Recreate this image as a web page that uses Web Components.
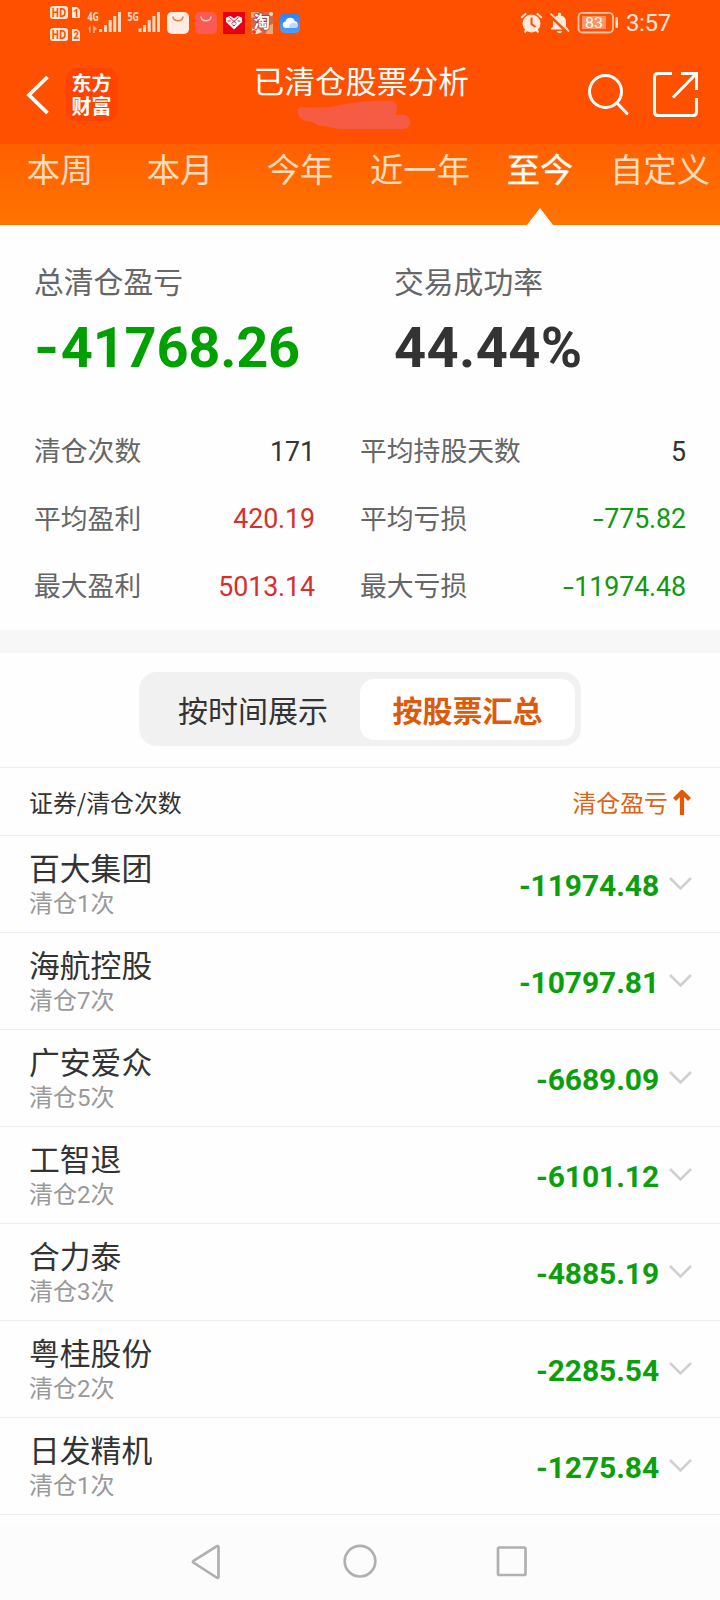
<!DOCTYPE html>
<html lang="zh-CN">
<head>
<meta charset="utf-8">
<title>已清仓股票分析</title>
<style>
html,body{margin:0;padding:0;background:#fefefe}
body{width:720px;height:1600px;overflow:hidden;font-family:"Noto Sans CJK SC",sans-serif;color:#333}
</style>
</head>
<body>
<closed-analysis></closed-analysis>
<script>
function define(name, html) {
  const t = document.createElement('template');
  t.innerHTML = html;
  customElements.define(name, class extends HTMLElement {
    constructor() {
      super();
      this.attachShadow({mode: 'open'}).appendChild(t.content.cloneNode(true));
    }
  });
}

define('status-bar', `
<style>
:host{display:flex;height:50px;box-sizing:border-box;align-items:flex-start;padding:0 49px 0 49px;color:#ffe9dc;justify-content:space-between}
.g{display:flex}
svg{display:block;height:50px}
.time{font:24px/47px Roboto,sans-serif;letter-spacing:-.3px;margin-left:7px}
text{font-family:"Open Sans",sans-serif;font-weight:700}
</style>
<div class="g">
 <svg width="35" viewBox="49 0 35 50">
  <g fill="#ffe9dc"><rect x="50" y="6" width="18" height="13" rx="3"/><rect x="50" y="28" width="18" height="13" rx="3"/>
  <path d="M72 7h5l3 3v8h-8zM72 29h5l3 3v9h-8z"/></g>
  <g fill="#ff5000" font-size="11.5"><text x="51.5" y="16.8" textLength="15" lengthAdjust="spacingAndGlyphs">HD</text><text x="51.5" y="38.8" textLength="15" lengthAdjust="spacingAndGlyphs">HD</text><text x="73.2" y="16.7" font-size="10">1</text><text x="73.2" y="38.7" font-size="10">2</text></g>
 </svg>
 <svg width="39" viewBox="84 0 39 50" fill="#ffd9c4">
  <text x="87.500" y="20.500" font-size="11.500" textLength="11.500" lengthAdjust="spacingAndGlyphs">4G</text>
  <path d="M99 29h3v3h-3zM104 25h3v7h-3zM108.700 20h3v12h-3zM113.200 16h3v16h-3zM118 12h3v20h-3z"/>
  <path d="M88 29l2.500-3.500v7h-1.500v-4zM93 25l4 4-2 1v3h-2z" opacity=".65"/>
 </svg>
 <svg width="42" viewBox="123 0 42 50" fill="#ffd9c4">
  <text x="127.500" y="20.500" font-size="11.500" textLength="11.500" lengthAdjust="spacingAndGlyphs">5G</text>
  <path d="M138.500 28.500h3v3.500h-3zM143 25h3v7h-3zM147.700 20h3v12h-3zM152.400 16h3v16h-3zM157 12h3v20h-3z"/>
 </svg>
 <svg width="57" viewBox="165 0 57 50">
  <rect x="167" y="12" width="22" height="22" rx="5" fill="#ffede4"/><path d="M173 17c1 5 9 5 10 0" fill="none" stroke="#e77b4b" stroke-width="1.400" stroke-linecap="round"/>
  <rect x="195" y="12" width="22" height="22" rx="5" fill="#fb5953"/><path d="M201 17c1 5 9 5 10 0" fill="none" stroke="#ffd0c8" stroke-width="1.400" stroke-linecap="round"/>
 </svg>
 <svg width="80" viewBox="222 0 80 50">
  <rect x="223" y="12" width="22" height="22" fill="#e60012"/>
  <path d="M234 29.500l-8-7.500v-4.500l4.500-1.500 3.500 2.500 3.500-2.500 4.500 1.500v4.500z" fill="#fff"/>
  <path d="M229.500 17.500l7 6M238.500 17.500l-7 6M227.500 21h3M237.500 21h3M232.500 24.500l1.500 1.500 1.500-1.500" stroke="#e60012" stroke-width=".9" fill="none"/>
  <rect x="251" y="12" width="22" height="22" fill="#d2694c"/><path d="M251 12h8l-4 5-4 1zM267 26l6-2v10h-7z" fill="#e8a87c"/><path d="M252 29l5-2 5 5-5 2h-5z" fill="#efe1cf"/><circle cx="271" cy="14" r="2" fill="#f7ddbd"/><circle cx="254" cy="32" r="2" fill="#ee3a22"/>
  <text x="253.500" y="27.500" font-size="16.500" fill="#fff" stroke="#a0453a" stroke-width="1.500" paint-order="stroke" style="font-family:'Noto Sans CJK SC',sans-serif">淘</text>
  <defs><linearGradient id="c" x2="0" y2="1"><stop stop-color="#2f80f1"/><stop offset="1" stop-color="#4aa0ff"/></linearGradient></defs>
  <rect x="280" y="13" width="20" height="20" rx="5" fill="url(#c)"/>
  <path d="M285.500 28a3.300 3.300 0 0 1 0-6.500 4.800 4.800 0 0 1 9.200-.5 3.600 3.600 0 0 1 .3 7z" fill="#fff"/><path d="M289 28a4 4 0 0 1 4-5 4 4 0 0 1 5 2 3 3 0 0 1-3 3z" fill="#b9dcff"/>
 </svg>
</div>
<div class="g">
 <svg width="99" viewBox="520 0 99 50">
  <g fill="#ffe9dc"><circle cx="531.500" cy="23.500" r="9"/><path d="M520.500 17l5-4.300 1.300 1.500-5 4.300zM542.500 17l-5-4.300-1.300 1.500 5 4.300zM524 31l2-2 1.500 1.500-2.500 3zM539 31l-2-2-1.500 1.500 2.500 3z"/></g>
  <path d="M531.500 17.500v6.500l4 3" stroke="#ff5000" stroke-width="2" fill="none"/>
  <path d="M551 28.500l2-2v-5c0-3 2-5.300 5-6V14c0-1.800 3-1.800 3 0v1.500c3 .7 5 3 5 6v5l2.200 2v.9H551zM557 31h5c-.5 3-4.500 3-5 0z" fill="#ffe9dc"/>
  <path d="M549 14.500l18.500 18" stroke="#ff5000" stroke-width="3"/><path d="M550.500 13.500l18.500 18" stroke="#ffe9dc" stroke-width="1.700"/>
  <rect x="578.500" y="12.800" width="34.500" height="19.700" rx="4" fill="none" stroke="#ffc3a6" stroke-width="1.800"/><rect x="582" y="16" width="24" height="13" fill="#ff9361"/><rect x="615.500" y="17" width="2.500" height="11" rx="1" fill="#ffe0d0"/>
  <text x="585" y="28" font-size="15.500" fill="#fff" style="font-family:Roboto,sans-serif;font-weight:400" textLength="18" lengthAdjust="spacingAndGlyphs">83</text>
 </svg>
 <div class="time">3:57</div>
</div>`);

define('brand-logo', `
<style>:host{display:block;width:52px;height:53px;border-radius:11px;background:#ff4400;color:#fff;font:700 20px/23px "Noto Sans CJK SC",sans-serif;text-align:center;box-sizing:border-box;padding-top:3px}</style>东方<br>财富`);

define('title-bar', `
<style>
:host{display:flex;height:94px;align-items:flex-start;box-sizing:border-box;padding:0 20px 0 25px;color:#fff}
.back{margin-top:24px}
brand-logo{margin:18px 0 0 15.500px}
.mid{flex:1;display:flex;flex-direction:column;align-items:center;padding-left:18px;margin-right:7px}
.t{font-size:30.800px;line-height:44px;margin-top:8px;white-space:nowrap}
.scr{margin-top:-2px;margin-left:-16px}
svg{display:block}
.ic{margin-top:20px;margin-left:-7px}
</style>
<svg class="back" width="25" height="42" fill="none" stroke="#fff" stroke-width="3.800"><path d="M22.500 3L4 21l18.500 18"/></svg>
<brand-logo></brand-logo>
<div class="mid"><div class="t">已清仓股票分析</div>
<svg class="scr" width="114" height="30" viewBox="297 100 114 30"><path d="M303 107c15 1 28 1 38-2 18-4 40-5 53-4 5 2 5 9 2 14 8-1 15 0 15 7 0 5-3 7-9 7h-58c-8 0-12-2-19-3-8 1-10-5-17-5-8-1-14-12-5-14z" fill="#f65c43"/></svg></div>
<svg class="ic" width="113" height="55" viewBox="587 70 113 55" fill="none" stroke="#fff" stroke-width="3"><circle cx="605.500" cy="91.500" r="16"/><path d="M617 103l10 10.500" stroke-linecap="round"/><path d="M672 73.500h-14q-3.500 0-3.500 3.500v35q0 3.500 3.500 3.500h35q3.500 0 3.500-3.500V98M681 73.500h15.500V90M696 74l-23 23.500"/></svg>`);

define('period-tab', `
<style>
:host{display:flex;flex-direction:column;align-items:center;justify-content:space-between;color:#ffdcbb;font-size:33.300px;line-height:48px;white-space:nowrap}
:host([active]){color:#fff}
:host([active]) span{-webkit-text-stroke:.35px #fff}
i{display:none;width:26px;height:17px;background:#fefefe;clip-path:polygon(50% 0,100% 100%,0 100%)}
:host([active]) i{display:block}
</style><span><slot></slot></span><i></i>`);

define('period-tabs', `
<style>:host{display:grid;grid-template-columns:repeat(6,120px);height:81px;background:linear-gradient(#ff6000,#ff7400)}</style>
<period-tab>本周</period-tab><period-tab>本月</period-tab><period-tab>今年</period-tab><period-tab>近一年</period-tab><period-tab active>至今</period-tab><period-tab>自定义</period-tab>`);

define('head-stat', `
<style>
:host{display:block}
.l{font-size:29.800px;line-height:44px;color:#666}
.v{font:700 56px/66px Roboto,sans-serif;color:var(--c,#333);letter-spacing:var(--ls,0);margin-top:13px}
</style><div class="l"><slot name="label"></slot></div><div class="v"><slot></slot></div>`);

define('stat-pair', `
<style>
:host{display:flex;justify-content:space-between;align-items:center;height:67.500px}
.l{font-size:26.800px;line-height:40px;color:#666}
.v{font:26.800px/40px Roboto,sans-serif;color:var(--c,#333);padding-top:3px;letter-spacing:-.1px}
</style><div class="l"><slot name="label"></slot></div><div class="v"><slot></slot></div>`);

define('stat-panel', `
<style>
:host{display:block;height:405px;box-sizing:border-box;padding:33px 34px 0 34px}
.top{display:grid;grid-template-columns:360px 1fr;height:158.500px}
.grid{display:grid;grid-template-columns:281px 326px;column-gap:45px}
.g{--c:#0f990f}.r{--c:#d7302c}
.m{display:inline-block;transform:scaleX(1.45);transform-origin:0 50%;margin-right:4px}
.top .m{transform:scaleX(1.15);margin-right:5px}
</style>
<div class="top"><head-stat style="--c:#00a000;--ls:-.25px"><span slot="label">总清仓盈亏</span><span class="m">-</span>41768.26</head-stat><head-stat style="--ls:.4px"><span slot="label">交易成功率</span>44.44%</head-stat></div>
<div class="grid">
<stat-pair><span slot="label">清仓次数</span>171</stat-pair><stat-pair><span slot="label">平均持股天数</span>5</stat-pair>
<stat-pair class="r"><span slot="label">平均盈利</span>420.19</stat-pair><stat-pair class="g"><span slot="label">平均亏损</span><span class="m">-</span>775.82</stat-pair>
<stat-pair class="r"><span slot="label">最大盈利</span>5013.14</stat-pair><stat-pair class="g"><span slot="label">最大亏损</span><span class="m">-</span>11974.48</stat-pair>
</div>`);

define('view-switch', `
<style>
:host{display:block;border-top:23px solid #f7f7f7;padding:19px 0 21px;border-bottom:1px solid #ebebeb}
.box{display:grid;grid-template-columns:221px 215px;width:442px;height:74px;box-sizing:border-box;margin:0 auto;background:#f1f1f1;border-radius:18px;padding:7px 6px 6px 0;font-size:30px;text-align:center;line-height:60px}
.a{padding-left:7px}
.b{background:#fff;border-radius:14px;color:#dd5a0b;font-weight:700}
</style><div class="box"><div class="a">按时间展示</div><div class="b">按股票汇总</div></div>`);

define('list-head', `
<style>
:host{display:flex;justify-content:space-between;align-items:center;height:67px;padding:0 28px 0 29px;border-bottom:1px solid #ebebeb;font-size:23.900px;line-height:36px}
.s{display:flex;align-items:center;color:#dc6317;gap:4px}
svg{display:block}
</style><span>证券/清仓次数</span><div class="s"><span>清仓盈亏</span><svg width="20" height="28" fill="none" stroke="#e25a08" stroke-width="4.200"><path d="M10 27V4M2.500 11.500L10 4l7.500 7.500" stroke-linejoin="round"/></svg></div>`);

define('stock-row', `
<style>
:host{display:flex;justify-content:space-between;height:96px;border-bottom:1px solid #ebebeb;padding:0 28px 0 29px;font-family:Roboto,"Noto Sans CJK SC",sans-serif}
.n{font-size:30.800px;line-height:40px;margin-top:14px}
.c{font-size:24px;line-height:32px;color:#999;margin-top:-2px}
.r{display:flex;align-items:center;gap:10px}
.v{font:700 30px/40px Roboto,sans-serif;letter-spacing:-.1px;color:#0c9f0c;margin-top:3px}
svg{display:block}
</style>
<div><div class="n"><slot name="name"></slot></div><div class="c"><slot name="count"></slot></div></div>
<div class="r"><div class="v"><slot></slot></div><svg width="23" height="14" fill="none" stroke="#d0d0d0" stroke-width="2.600"><path d="M1 1l10.500 10.500L22 1"/></svg></div>`);

define('system-nav', `
<style>:host{display:flex;height:78px;background:#fcfcfc;box-sizing:border-box;padding:21px 0 0 190px}svg{display:block}</style>
<svg width="340" height="36" viewBox="0 0 340 36" fill="none" stroke="#b0b0b0" stroke-width="2.700" stroke-linejoin="round"><path d="M28.500 2.800v30.200q-.5 1.500-2 .5L3.500 18.700q-1.200-.9 0-1.800L26.500 2.300q1.500-.8 2 .5z"/><circle cx="170" cy="17.200" r="15.300"/><rect x="308" y="3.500" width="27.500" height="27.500" rx="1.500"/></svg>`);

const stocks = [['百大集团',1,'-11974.48'],['海航控股',7,'-10797.81'],['广安爱众',5,'-6689.09'],['工智退',2,'-6101.12'],['合力泰',3,'-4885.19'],['粤桂股份',2,'-2285.54'],['日发精机',1,'-1275.84']];
define('closed-analysis', `
<style>
:host{display:block;width:720px;height:1600px;overflow:hidden}
header{background:#ff5000}
.list{height:687px}
</style>
<header><status-bar></status-bar><title-bar></title-bar><period-tabs></period-tabs></header>
<stat-panel></stat-panel><view-switch></view-switch><list-head></list-head>
<div class="list">${stocks.map(([n,c,v]) => `<stock-row><span slot="name">${n}</span><span slot="count">清仓${c}次</span>${v}</stock-row>`).join('')}</div>
<system-nav></system-nav>`);
</script>
</body>
</html>
